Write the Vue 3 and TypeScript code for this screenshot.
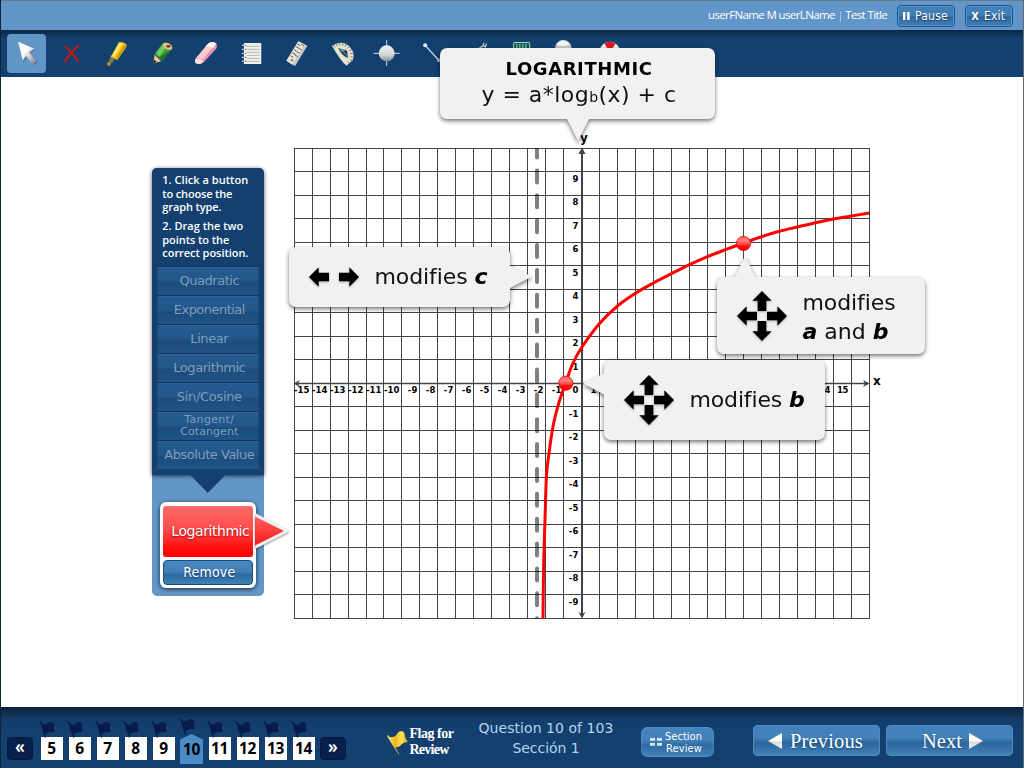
<script setup lang="ts">
interface Tick { text: string; x: number; y: number; w: number }
interface Point { x: number; y: number }

// Stretches or tightens a label's tracking so that it fills the given width.
const vFit = {
  mounted(el: HTMLElement, binding: { value: number }) {
    const natural = el.getBoundingClientRect().width
    const count = (el.textContent ?? '').trim().length
    el.style.letterSpacing = `${(binding.value - natural) / count}px`
  },
}

const columns = Array.from({ length: 33 }, (_, i) => 294.5 + 18 * i - (i >= 5 ? 1 : 0)).filter((_, i) => i !== 16)
const rows = Array.from({ length: 21 }, (_, i) => Math.floor(148 + 23.5 * i) + 0.5)

const ticks: Tick[] = []
for (const n of [-15, -14, -13, -12, -11, -10, -9, -8, -7, -6, -5, -4, -3, -2, -1, 0, 1, 14, 15]) {
  const text = String(n)
  ticks.push({ text, x: (n < 0 ? 579.5 : 578.5) + 18 * n, y: 393, w: tickWidth(text) })
}
for (let n = -9; n <= 9; n++) {
  if (n === 0) continue
  const text = String(n)
  ticks.push({ text, x: 578.5, y: Math.floor(393.5 - 23.5 * n), w: tickWidth(text) })
}
function tickWidth(text: string): number {
  return [...text].reduce((sum, c) => sum + (c === '-' ? 4 : 5.8), 0)
}

const samples: Point[] = [
  [543, 619], [543.6, 566.7], [545, 520], [546.4, 477], [549, 453], [553.3, 425], [558.5, 404], [566, 382],
  [573, 363], [582, 347], [599.5, 323.5], [617.5, 306], [635.5, 293.3], [653.5, 283], [671.5, 273.7],
  [689.5, 264.7], [707.5, 256.7], [725.5, 249.7], [743.5, 243], [761.5, 236.7], [779.5, 231.3],
  [797.5, 227], [815.5, 222.7], [833.5, 219], [851.5, 216], [869.5, 213],
].map(([x, y]) => ({ x, y }))

function smooth(p: Point[]): string {
  let d = `M${p[0].x} ${p[0].y}`
  for (let i = 0; i < p.length - 1; i++) {
    const a = p[Math.max(0, i - 1)]
    const b = p[i]
    const c = p[i + 1]
    const e = p[Math.min(p.length - 1, i + 2)]
    d += `C${b.x + (c.x - a.x) / 6} ${b.y + (c.y - a.y) / 6} ${c.x - (e.x - b.x) / 6} ${c.y - (e.y - b.y) / 6} ${c.x} ${c.y}`
  }
  return d
}
const curve = smooth(samples)

const graphTypes = [
  { label: 'Quadratic', w: 59.5 },
  { label: 'Exponential', w: 71 },
  { label: 'Linear', w: 38 },
  { label: 'Logarithmic', w: 72 },
  { label: 'Sin/Cosine', w: 65 },
  { label: 'Tangent/', second: 'Cotangent', w: 50, w2: 58 },
  { label: 'Absolute Value', w: 90 },
]
const questions = [5, 6, 7, 8, 9, 10, 11, 12, 13, 14]
const current = 10
const turns = [0, 90, 180, 270]
const box = (i: number) => `${3 * (6.5 + 44.85 * i)} 102 117 117`
</script>

<template>
  <div class="app">
    <header class="top">
      <span v-fit="179" class="user">userFName M userLName <i>|</i> Test Title</span>
      <button class="small pause"><svg viewBox="0 0 7 8"><path d="M0 0h2.4v8H0zM4.2 0h2.4v8H4.2z" fill="#fff" /></svg><span v-fit="33">Pause</span></button>
      <button class="small exit"><b>X</b><span v-fit="21">Exit</span></button>
    </header>

    <nav class="tools">
      <span class="tool active">
        <svg :viewBox="box(0)">
          <defs><linearGradient id="cur" x2="1" y2="1"><stop offset=".4" stop-color="#fff" /><stop offset="1" stop-color="#777" /></linearGradient></defs>
          <path d="M55 128L104 148L88 159L110 186L101 196L80 171L69 185Z" fill="#24496e" opacity=".5" />
          <path d="M53 125L102 146L86 157L108 184L97 194L76 168L67 182Z" fill="url(#cur)" />
        </svg>
      </span>
      <span class="tool"><svg :viewBox="box(1)"><path d="M192 138Q212 155 234 186M234 137Q210 155 192 187" fill="none" stroke="#c81414" stroke-width="6" /></svg></span>
      <span class="tool">
        <svg :viewBox="box(2)">
          <path d="M318 189L327 184L331 189L328 197L320 197Z" fill="#b98d16" />
          <path d="M330 165L342 174L334 190L324 184Z" fill="#77786c" />
          <path d="M354 127Q366 123 378 134L375 143L349 181Q341 174 330 170Z" fill="#f8c81c" />
          <path d="M357 129L364 131L341 169L334 168Z" fill="#fff07b" />
          <path d="M371 133L377 137L350 177L345 174Z" fill="#d99508" />
        </svg>
      </span>
      <span class="tool">
        <svg :viewBox="box(3)">
          <path d="M457 190L461 164L481 184Z" fill="#edc889" />
          <path d="M457 190L459 179L467 185Z" fill="#111" />
          <path d="M461 161L484 131Q500 121 514 138L515 145L482 184Q474 170 461 161Z" fill="#3f9d3c" />
          <path d="M466 159L488 130L499 138L474 170Z" fill="#75c963" />
          <ellipse cx="500" cy="139" rx="15" ry="9" transform="rotate(32 500 139)" fill="#e7c37d" />
          <ellipse cx="502" cy="139" rx="6" ry="4" fill="#7f2e26" />
          <path d="M474 174L481 184L513 145L508 149Z" fill="#226f27" />
        </svg>
      </span>
      <span class="tool">
        <svg :viewBox="box(4)">
          <path d="M585 178L623 132Q637 121 650 131V144L611 187Q597 195 585 188Z" fill="#e794a8" />
          <path d="M586 176L624 131Q638 123 648 131L608 178Q597 174 586 176Z" fill="#fac8d1" />
          <path d="M624 131Q637 123 648 131L638 145Q629 137 615 142Z" fill="#fff2f1" />
          <path d="M586 178Q598 173 608 181L606 190Q595 195 585 188Z" fill="#ffe1e3" />
        </svg>
      </span>
      <span class="tool">
        <svg :viewBox="box(5)">
          <path d="M731 129H783V192H731Z" fill="#f0f0eb" />
          <path d="M739 139H778M739 148H778M739 157H778M739 166H778M739 175H778M739 184H778" stroke="#a6a9ad" stroke-width="2.5" />
          <path d="M725 136H736M725 148H736M725 160H736M725 172H736M725 184H736" stroke="#c9ced5" stroke-width="4" />
          <path d="M735 136h3M735 148h3M735 160h3M735 172h3M735 184h3" stroke="#a05358" stroke-width="4" />
        </svg>
      </span>
      <span class="tool">
        <svg :viewBox="box(6)">
          <path d="M894 124L921 137L884 198L858 182Z" fill="#c5c8c7" />
          <path d="M894 124L914 134L876 194L858 182Z" fill="#e4e2d8" />
          <path d="M892 132L899 136M887 140L897 146M881 149L889 154M876 158L886 164M870 167L878 172M911 138L903 133M904 150L897 146M898 160L890 155M892 170L884 165" stroke="#555d5e" stroke-width="3" />
          <circle cx="875" cy="181" r="3" fill="#555" />
        </svg>
      </span>
      <span class="tool">
        <svg :viewBox="box(7)">
          <path d="M994 137Q1026 119 1046 139T1056 181L1038 197Q1021 184 994 137Z" fill="#e6e4cf" />
          <path d="M1013 144L1040 152L1042 174Q1024 168 1013 144Z" fill="#153e64" />
          <path d="M1020 147L1042 169M1016 154L1036 149" stroke="#91a68b" stroke-width="3" />
          <path d="M998 134L1003 142M1006 130L1011 139M1016 127L1019 137M1027 127L1027 137M1038 131L1034 140M1048 138L1041 145M1055 148L1046 152M1059 160L1049 161M1059 172L1050 170M1055 183L1048 178M1047 191L1042 184" stroke="#55625a" stroke-width="2.4" />
        </svg>
      </span>
      <span class="tool">
        <svg :viewBox="box(8)">
          <defs><linearGradient id="ball" x2="0" y2="1"><stop stop-color="#f1f3ef" /><stop offset=".6" stop-color="#cfd5d1" /><stop offset="1" stop-color="#818f98" /></linearGradient></defs>
          <path d="M1119 160H1197M1158 120V198" stroke="#c9dce9" stroke-width="3" />
          <circle cx="1158" cy="160" r="24" fill="url(#ball)" />
        </svg>
      </span>
      <span class="tool"><svg :viewBox="box(9)"><path d="M1273 136L1314 181" stroke="#d8e1e8" stroke-width="4" /><circle cx="1273" cy="136" r="6" fill="#e7ecef" /><circle cx="1314" cy="181" r="6" fill="#9db2c4" /></svg></span>
      <span class="tool"><svg :viewBox="box(10)"><path d="M1434 147L1450 137L1458 142M1448 137L1453 128M1456 139L1460 131" fill="none" stroke="#cbd2ca" stroke-width="3.5" /></svg></span>
      <span class="tool"><svg :viewBox="box(11)"><rect x="1539" y="126" width="51" height="65" rx="5" fill="#a8d5bd" /><rect x="1542" y="129" width="45" height="30" fill="#155b4e" /><path d="M1550 131V145M1559 131V145M1568 131V145M1577 131V145" stroke="#65b596" stroke-width="4" /></svg></span>
      <span class="tool"><svg :viewBox="box(12)"><circle cx="1689" cy="145" r="25" fill="#c8caca" /><path d="M1669 134Q1684 110 1708 132Q1691 143 1669 134" fill="#f4f4f1" /></svg></span>
      <span class="tool"><svg :viewBox="box(13)"><circle cx="1828" cy="156" r="31" fill="#eee" /><path d="M1812 130Q1828 121 1845 130L1837 145H1820Z" fill="#df1920" /></svg></span>
    </nav>

    <main class="stage">
      <aside class="panel">
        <div class="chooser">
          <p class="hint first"><span v-fit="86">1. Click a button</span><span v-fit="70">to choose the</span><span v-fit="59">graph type.</span></p>
          <p class="hint"><span v-fit="81">2. Drag the two</span><span v-fit="67">points to the</span><span v-fit="86">correct position.</span></p>
          <ul class="types">
            <li v-for="g in graphTypes" :key="g.label" :class="{ double: g.second }">
              <span v-fit="g.w">{{ g.label }}</span>
              <span v-if="g.second" v-fit="g.w2">{{ g.second }}</span>
            </li>
          </ul>
        </div>
        <div class="chosen">
          <svg class="arrow" viewBox="0 0 38 40">
            <defs><linearGradient id="redArrow" x2="0" y2="1"><stop stop-color="#ff6262" /><stop offset="1" stop-color="#ff1717" /></linearGradient></defs>
            <path d="M1 3L34 20L1 37Z" fill="#f2f2f2" stroke="#f2f2f2" stroke-width="1" />
            <path d="M0 5.5L29 20L0 34.5Z" fill="url(#redArrow)" />
          </svg>
          <div class="card">
            <div class="name"><span v-fit="78">Logarithmic</span></div>
            <button class="remove"><span v-fit="52">Remove</span></button>
          </div>
        </div>
      </aside>

      <svg class="graph" viewBox="280 130 620 500">
        <defs>
          <clipPath id="plot"><rect x="290" y="148.5" width="579.5" height="470" /></clipPath>
          <linearGradient id="dot" x2="0" y2="1"><stop stop-color="#ff6060" /><stop offset=".3" stop-color="#ff8080" /><stop offset=".58" stop-color="#ff4040" /><stop offset=".66" stop-color="#ff1010" /><stop offset="1" stop-color="#f00" /></linearGradient>
        </defs>
        <g stroke="#434343" stroke-width="1">
          <line v-for="x in columns" :key="'c' + x" :x1="x" :x2="x" y1="148" y2="619" />
          <line v-for="y in rows" :key="'r' + y" x1="294" x2="870" :y1="y" :y2="y" />
        </g>
        <g stroke="#434343" fill="#434343">
          <path d="M582 150V617" stroke-width="2" />
          <path d="M296 383.5H868" stroke-width="1.5" />
          <path d="M582 147.5L585.5 154H578.5ZM582 618.5L585.5 612L582 614L578.5 612ZM293.5 383.5L300 380L298 383.5L300 387ZM869.5 383.5L863 380L865 383.5L863 387Z" stroke="none" />
        </g>
        <g class="ticks">
          <text v-for="(t, i) in ticks" :key="i" :x="t.x" :y="t.y" :textLength="t.w" text-anchor="end">{{ t.text }}</text>
          <text class="axis" x="580" y="142">y</text>
          <text class="axis" x="873" y="385">x</text>
        </g>
        <g clip-path="url(#plot)" fill="none">
          <path d="M537 145.6V640" stroke="#000" stroke-opacity=".5" stroke-width="4" stroke-linecap="round" stroke-dasharray="12 12.87" />
          <path :d="curve" stroke="#f00" stroke-width="3" />
        </g>
        <g fill="url(#dot)" stroke="#dc0000" stroke-width=".8">
          <circle cx="565.8" cy="383.2" r="7.1" />
          <circle cx="743.5" cy="243.5" r="7.1" />
        </g>
      </svg>
    </main>

    <footer class="bottom">
      <div class="pager">
        <span class="step"><span v-fit="10">«</span></span>
        <span v-for="q in questions" :key="q" class="page" :class="{ current: q === current }">
          <svg class="flag" viewBox="0 0 48 54"><path d="M0 3L4 1L19 48L15 50Z" fill="#071c4b" /><path d="M5 7Q17 14 24 6T44 9Q39 19 44 34Q31 31 26 35T13 36Z" fill="#071c4b" /></svg>
          <span class="num">{{ q }}</span>
        </span>
        <span class="step"><span v-fit="10">»</span></span>
      </div>
      <div class="review">
        <svg viewBox="0 0 66 72"><defs><linearGradient id="gold"><stop stop-color="#fff29a" /><stop offset=".35" stop-color="#eeb31e" /><stop offset=".7" stop-color="#ffe256" /><stop offset="1" stop-color="#d49310" /></linearGradient></defs><path d="M2 14L7 12L40 70L38 71Z" fill="#c9a652" /><path d="M5 16Q23 24 33 9T55 5Q56 20 66 33Q52 33 45 42T24 49Z" fill="url(#gold)" /></svg>
        <p><span v-fit="44">Flag for</span><span v-fit="39">Review</span></p>
      </div>
      <p class="progress"><span v-fit="135">Question 10 of 103</span><span v-fit="67">Sección 1</span></p>
      <button class="section"><svg viewBox="0 0 12 8"><path d="M0 0h5v2.8H0zM7 0h5v2.8H7zM0 5h5v2.8H0zM7 5h5v2.8H7z" fill="#d8eafa" /></svg><span class="lines"><span v-fit="37">Section</span><span v-fit="36">Review</span></span></button>
      <button class="go prev"><svg viewBox="0 0 14 16"><defs><linearGradient id="tri" x2="0" y2="1"><stop stop-color="#fff" /><stop offset=".5" stop-color="#fff" /><stop offset=".55" stop-color="#ddd" /><stop offset="1" stop-color="#eee" /></linearGradient></defs><path d="M14 0V16L0 8Z" fill="url(#tri)" /></svg><span v-fit="73">Previous</span></button>
      <button class="go next"><span v-fit="40">Next</span><svg viewBox="0 0 14 16"><path d="M0 0V16L14 8Z" fill="url(#tri)" /></svg></button>
    </footer>

    <div class="callout formula">
      <strong v-fit="147">LOGARITHMIC</strong>
      <span v-fit="195" class="eq">y = a*log<small>b</small>(x) + c</span>
    </div>
    <div class="callout shift">
      <svg class="move" viewBox="-75 -75 150 150"><path v-for="t in [90, 270]" :key="t" :transform="`rotate(${t})`" d="M0-75L29-46H13V-15H-13V-46H-29Z" /></svg>
      <p><span v-fit="113">modifies <em>c</em></span></p>
    </div>
    <div class="callout upper">
      <svg class="move" viewBox="-75 -75 150 150"><path v-for="t in turns" :key="t" :transform="`rotate(${t})`" d="M0-75L29-46H13V-15H-13V-46H-29Z" /></svg>
      <p><span v-fit="93">modifies</span><span v-fit="86"><em>a</em> and <em>b</em></span></p>
    </div>
    <div class="callout lower">
      <svg class="move" viewBox="-75 -75 150 150"><path v-for="t in turns" :key="t" :transform="`rotate(${t})`" d="M0-75L29-46H13V-15H-13V-46H-29Z" /></svg>
      <p><span v-fit="115">modifies <em>b</em></span></p>
    </div>
  </div>
</template>

<style>
html, body { margin: 0; overflow: hidden; }
</style>

<style scoped>
* { box-sizing: border-box; }
p, ul { margin: 0; padding: 0; list-style: none; }
span { white-space: nowrap; }
button { padding: 0; margin: 0; color: inherit; font: inherit; display: flex; align-items: center; }
svg { display: block; flex: none; overflow: visible; }
.app {
  position: relative; width: 1024px; height: 768px; overflow: hidden; display: flex; flex-direction: column;
  background: #fff; border-left: 1px solid #10253d; border-right: 1px solid #5f6b76;
  font-family: "DejaVu Sans", Verdana, sans-serif;
}
.top { flex: none; height: 30px; display: flex; padding: 4px 10px 0 0; justify-content: flex-end; background: #6296c8; border-top: 1px solid #687b88; color: #fff; }
.user { font: 11.5px/20px "Open Sans", sans-serif; margin-right: 10px; }
.user i { font-style: normal; opacity: .5; }
.small { height: 22px; border: 1px solid #1b5592; border-radius: 4px; background: linear-gradient(#4682b9, #3e7db7 48%, #2e6599 55%, #4381b9); box-shadow: inset 0 0 0 1px #5993c8; font: 12px "DejaVu Sans Condensed", "DejaVu Sans", sans-serif; text-shadow: 0 1px 1px #193e62; }
.pause { width: 58px; padding-left: 5px; gap: 5px; }
.pause svg { width: 7px; height: 8px; }
.exit { width: 48px; margin-left: 10px; padding-left: 5px; gap: 5px; }
.exit b { font-size: 11px; width: 8px; }

.tools { flex: none; height: 47px; padding: 4px 0 0 6px; display: flex; gap: 5.85px; background: linear-gradient(#0b2745, #13406f 9px); }
.tool { width: 39px; height: 39px; border-radius: 4px; flex: none; }
.tool.active { background: #6296c8; }
.tool svg { width: 39px; height: 39px; }

.stage { height: 630px; flex: none; display: flex; align-items: flex-start; }
.panel { width: 112px; height: 428px; flex: none; margin: 91px 0 0 151.3px; border-radius: 5px; background: #6296c8; position: relative; z-index: 2; }
.chooser { height: 307px; padding: 5px 5px 0; background: #13406f; border-radius: 5px 5px 0 0; box-shadow: 0 1px 4px rgba(0, 0, 0, .65); position: relative; }
.chooser::after { content: ""; position: absolute; left: 38px; top: 307px; width: 35px; height: 18px; background: #13406f; clip-path: polygon(0 0, 100% 0, 50% 100%); }
.hint { display: flex; flex-direction: column; align-items: flex-start; padding-left: 5px; color: #fff; font: 600 11px/13.5px "Open Sans", sans-serif; height: 40.5px; }
.hint.first { margin-bottom: 5.5px; }
.types { margin-top: 6.5px; }
.types li { height: 29px; border-top: 1px solid #0d3560; border-left: 1px solid #1c4d80; border-right: 1px solid #1c4d80; box-shadow: inset 0 1px #2e6297; background: linear-gradient(#265b90, #235789 48%, #1b4c7c 58%, #205487); display: flex; flex-direction: column; align-items: center; justify-content: center; padding: 0 0 1px 2px; color: #7f9dbd; font: 13px/15px "DejaVu Sans", sans-serif; }
.types li.double { font-size: 11px; line-height: 12px; }
.chosen { margin: 27px 0 0 8px; position: relative; }
.card { position: relative; width: 96px; height: 86px; padding: 4px 3px 3px; border-radius: 6px; background: #fff; box-shadow: 0 1px 4px rgba(0, 0, 0, .75); }
.arrow { position: absolute; left: 95px; top: 9px; width: 38px; height: 40px; filter: drop-shadow(0 1px 1px rgba(0, 0, 0, .45)); z-index: 1; }
.name { height: 51px; border-radius: 3px; background: linear-gradient(#ff6b6b, #ff4c4c 45%, #ff1111 80%, #f00); display: flex; align-items: center; padding: 0 0 2px 8px; color: #fff; font: 14px "DejaVu Sans", sans-serif; text-shadow: 0 1px 2px #900; }
.remove { width: 90px; height: 25px; margin-top: 3px; padding: 0 0 2px 2px; justify-content: center; border: 1px solid #174c85; border-radius: 4px; color: #fff; background: linear-gradient(#4a87bd, #4380b8 45%, #2f699f 60%, #4180b9); font: 14px "DejaVu Sans Condensed", "DejaVu Sans", sans-serif; text-shadow: 0 1px 2px #123d67; }
.graph { width: 620px; height: 500px; margin: 53px 0 0 15.7px; }
.ticks { font: bold 8.5px "DejaVu Sans", sans-serif; }
.ticks .axis { font-size: 12px; }

.bottom { flex: none; height: 61px; position: relative; display: flex; align-items: flex-start; background: linear-gradient(#0a2139, #133c68 12px, #13406f 20px); }
.pager { display: flex; align-items: flex-start; margin: 30px 0 0 6px; }
.step { width: 26px; height: 23px; display: flex; align-items: center; justify-content: center; border: 1px solid #041a3c; border-radius: 4px; background: #08204b; color: #fff; font: 600 17px/18px "Noto Sans", sans-serif; margin-right: 8px; }
.step > span { margin-top: -3px; }
.page { position: relative; width: 22px; height: 23px; margin-right: 6px; background: #fff; display: flex; align-items: center; justify-content: center; font: bold 15.5px "Noto Sans", sans-serif; color: #000; }
.page + .step { margin: 0 0 0 -1px; }
.flag { position: absolute; left: -1px; top: -16px; width: 16px; height: 18px; }
.num { position: relative; top: -1px; left: -.5px; letter-spacing: -.3px; }
.page.current { background: none; }
.page.current::before { content: ""; position: absolute; left: -1px; right: 0; top: -3px; bottom: -4px; background: #4a8bc7; clip-path: polygon(50% 0, 100% 18%, 100% 100%, 0 100%, 0 18%); }
.page.current .flag { top: -19px; }
.page.current .num { top: 0; }
.review { display: flex; margin: 19px 0 0 39.5px; gap: 2px; color: #fff; }
.review svg { width: 22px; height: 24px; margin-top: 5px; }
.review p { display: flex; flex-direction: column; align-items: flex-start; font: bold 14px/15.5px "Liberation Serif", serif; }
.progress { width: 140px; margin: 11px 0 0 22.5px; display: flex; flex-direction: column; align-items: center; color: #b5d4ed; font: 14px/20px "DejaVu Sans", sans-serif; }
.section { width: 73px; height: 30px; margin: 20px 0 0 25px; padding-left: 9px; gap: 3px; border: 0; border-radius: 7px; background: linear-gradient(#4784bd, #4280b9 45%, #2e6ba2 62%, #4482bb); color: #fff; box-shadow: inset 0 0 2px #75a8d8; }
.section svg { width: 12px; height: 8px; }
.lines { display: flex; flex-direction: column; align-items: flex-end; font: 11px/12px "DejaVu Sans Condensed", "DejaVu Sans", sans-serif; padding-top: 1px; }
.go { height: 31px; width: 127px; border: 0; border-radius: 5px; background: linear-gradient(#4482bd, #4280ba 42%, #2d6699 58%, #4483bd); box-shadow: inset 0 0 0 1px #5489bd; color: #fff; font: 20.5px "Liberation Serif", serif; margin-top: 18px; text-shadow: 0 1px 2px #194870; }
.go svg { width: 14px; height: 16px; }
.go span { padding-top: 1px; }
.prev { margin-left: 39px; padding-left: 15px; gap: 8px; }
.next { margin-left: 6px; padding-left: 36px; gap: 7px; }

.callout { position: absolute; z-index: 5; display: flex; border-radius: 7px; background: #f1f1f1; filter: drop-shadow(0 2px 2px rgba(0, 0, 0, .55)); color: #111; font-size: 22px; line-height: 29px; }
.callout::after { content: ""; position: absolute; width: 22px; height: 22px; background: #f1f1f1; }
.callout p { display: flex; flex-direction: column; align-items: flex-start; }
.callout em { font-weight: bold; font-style: italic; color: #000; }
.formula { left: 439px; top: 48px; width: 275px; height: 71px; flex-direction: column; align-items: center; padding: 10px 0 0 3px; }
.formula strong { font-size: 18px; line-height: 22px; color: #000; }
.eq small { font-size: 14px; }
.formula::after { left: 127px; top: 71px; clip-path: polygon(0 0, 100% 0, 50% 100%); }
.move { width: 50px; height: 50px; filter: drop-shadow(0 1px 1px rgba(0, 0, 0, .3)); }
.shift { left: 288px; top: 247px; width: 221px; height: 60px; align-items: center; padding: 0 0 1px 19.5px; gap: 16px; }
.shift::after { left: 221px; top: 19px; clip-path: polygon(0 0, 100% 48%, 0 100%); }
.upper { left: 716px; top: 277px; width: 208px; height: 77px; align-items: center; padding: 0 0 0 19.5px; gap: 16px; }
.upper p { padding-top: 2px; }
.upper::after { left: 17px; top: -21px; clip-path: polygon(0 100%, 50% 0, 100% 100%); }
.lower { left: 603px; top: 360px; width: 221px; height: 80px; align-items: center; padding: 0 0 1px 19.5px; gap: 16px; }
.lower::after { left: -21px; top: 13px; clip-path: polygon(100% 0, 0 48%, 100% 100%); }
</style>
